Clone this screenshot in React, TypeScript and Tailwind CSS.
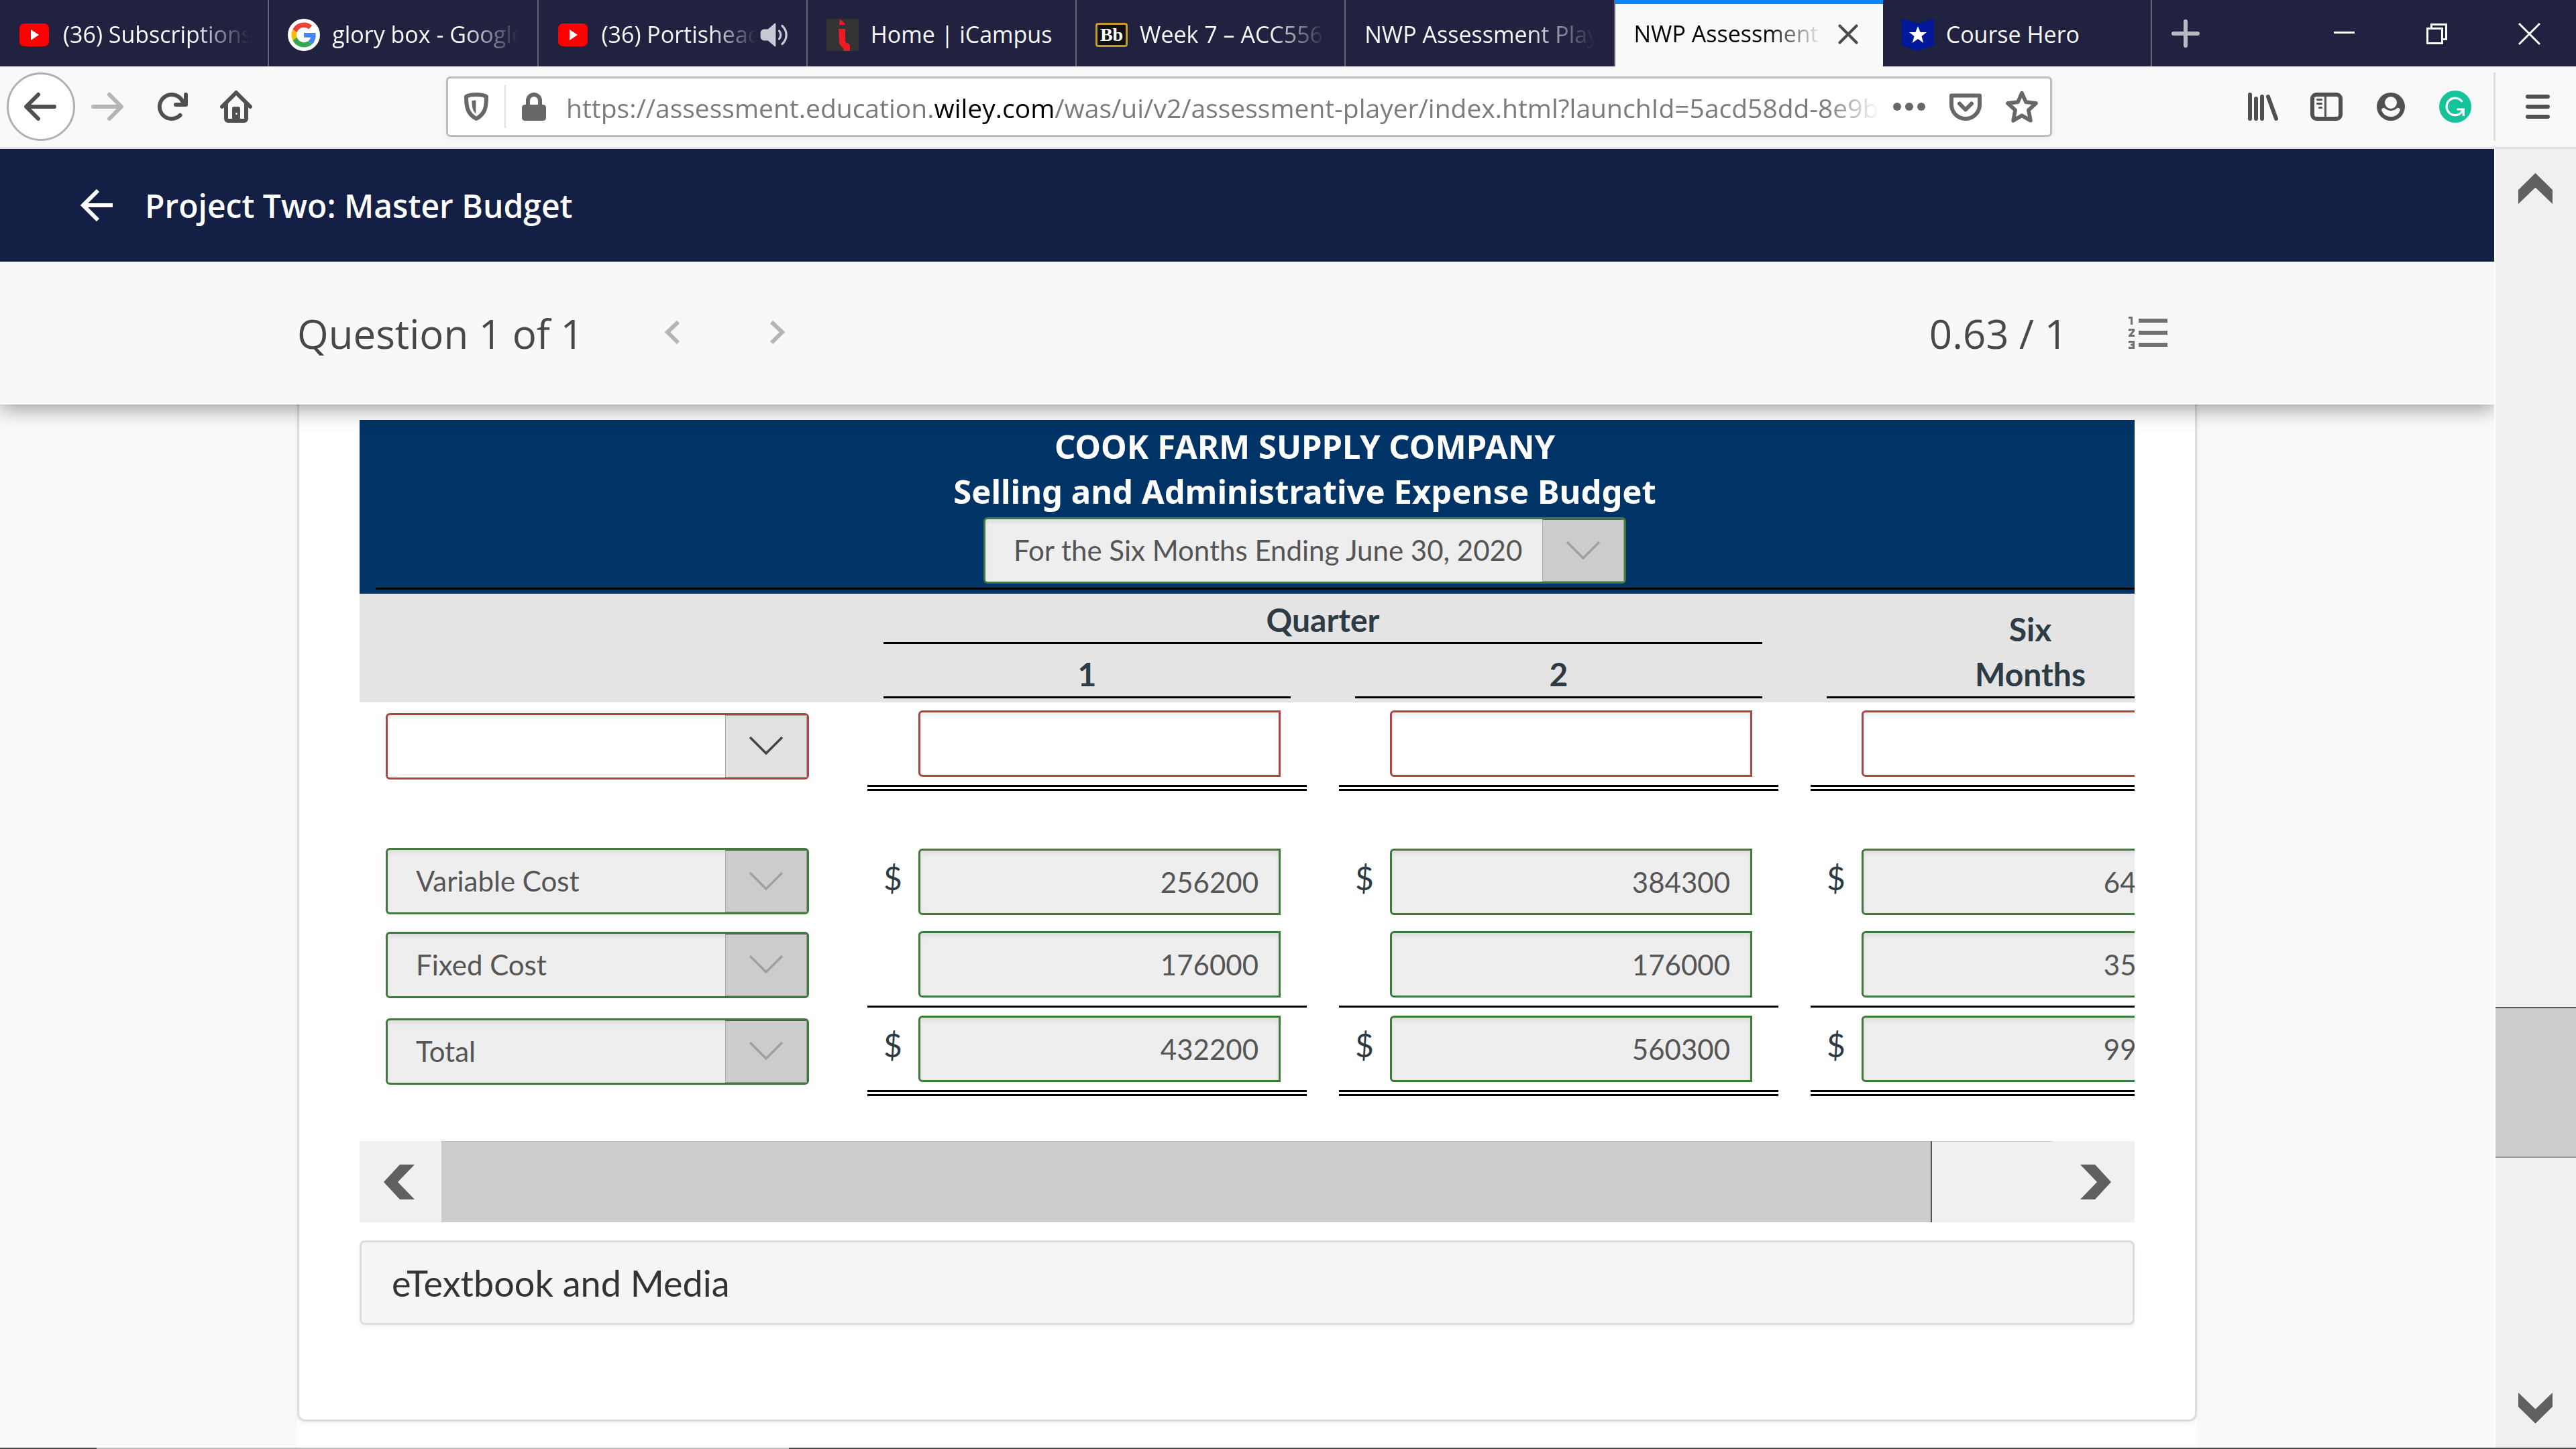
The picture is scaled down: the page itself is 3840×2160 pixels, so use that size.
import type { ReactNode } from "react";

const ICON = "size-12 shrink-0";

function YouTubeIcon() {
  return (
    <svg viewBox="0 0 48 48" className={ICON} aria-hidden="true">
      <rect x="1" y="7" width="44" height="34" rx="7" fill="#f00" />
      <path d="M18 16 30 24 18 32z" fill="#fff" />
    </svg>
  );
}

function GoogleIcon() {
  return (
    <svg viewBox="0 0 48 48" className={ICON} aria-hidden="true">
      <circle cx="24" cy="24" r="24" fill="#fff" />
      <g transform="translate(5.5 5.5) scale(.77)">
        <path fill="#EA4335" d="M24 9.5c3.54 0 6.71 1.22 9.21 3.6l6.85-6.85C35.9 2.38 30.47 0 24 0 14.62 0 6.51 5.38 2.56 13.22l7.98 6.19C12.43 13.72 17.74 9.5 24 9.5z" />
        <path fill="#4285F4" d="M46.98 24.55c0-1.57-.15-3.09-.38-4.55H24v9.02h12.94c-.58 2.96-2.26 5.48-4.78 7.18l7.73 6c4.51-4.18 7.09-10.36 7.09-17.65z" />
        <path fill="#FBBC05" d="M10.53 28.59c-.48-1.45-.76-2.99-.76-4.59s.27-3.14.76-4.59l-7.98-6.19C.92 16.46 0 20.12 0 24c0 3.88.92 7.54 2.56 10.78l7.97-6.19z" />
        <path fill="#34A853" d="M24 48c6.48 0 11.93-2.13 15.89-5.81l-7.73-6c-2.15 1.45-4.92 2.3-8.16 2.3-6.26 0-11.57-4.22-13.47-9.91l-7.98 6.19C6.51 42.62 14.62 48 24 48z" />
      </g>
    </svg>
  );
}

function CampusIcon() {
  return (
    <svg viewBox="0 0 48 48" className={ICON} aria-hidden="true">
      <rect width="48" height="48" fill="#333" />
      <path d="M20 1c3 2 6 4 8 8h-9z" fill="#ed1c24" />
      <path d="M18 15h10v18c0 4 7 3 7 7v8h-9c0-6-7-7-7-13z" fill="#ed1c24" />
    </svg>
  );
}

function BlackboardIcon() {
  return (
    <span className="flex h-9 w-12 shrink-0 items-center justify-center rounded-sm border-3 border-[#c79a2e] bg-[#111] font-['Liberation_Serif',serif] text-[28px] leading-none font-bold text-white" aria-hidden="true">
      Bb
    </span>
  );
}

function CourseHeroIcon() {
  return (
    <svg viewBox="0 0 48 48" className={ICON} aria-hidden="true">
      <path d="M0 0 24 7 48 0V40L24 48 0 40z" fill="#001899" />
      <path d="M24 11l3.600 9h9.400l-7.500 6 2.800 10L24 30l-8.300 6 2.800-10L11 20h9.400z" fill="#fff" />
    </svg>
  );
}

function SpeakerIcon() {
  return (
    <svg viewBox="0 0 16 16" className={ICON} fill="none" stroke="#c9c9d3" strokeLinecap="round" aria-hidden="true">
      <path d="M8.500 2.500v11L5 10.500H3a1.500 1.500 0 0 1-1.500-1.500V7A1.500 1.500 0 0 1 3 5.500h2z" fill="#c9c9d3" strokeLinejoin="round" strokeWidth=".6" />
      <path d="M10.500 6a3 3 0 0 1 0 4M12 3.500a6 6 0 0 1 0 9" strokeWidth="1.100" />
    </svg>
  );
}

type TabInfo = { title: string; icon?: ReactNode; audio?: boolean; active?: boolean; fade?: boolean };

const TABS: TabInfo[] = [
  { title: "(36) Subscriptions - YouTube", icon: <YouTubeIcon />, fade: true },
  { title: "glory box - Google Search", icon: <GoogleIcon />, fade: true },
  { title: "(36) Portishead - Glory Box", icon: <YouTubeIcon />, audio: true, fade: true },
  { title: "Home | iCampus", icon: <CampusIcon /> },
  { title: "Week 7 – ACC556", icon: <BlackboardIcon />, fade: true },
  { title: "NWP Assessment Player", fade: true },
  { title: "NWP Assessment Player", active: true, fade: true },
  { title: "Course Hero", icon: <CourseHeroIcon /> },
];

function Tab({ tab }: { tab: TabInfo }) {
  const base = "flex min-w-0 flex-1 items-center gap-[18px] pl-7 pr-7";
  return (
    <div className={tab.active ? `${base} border-t-6 border-[#0a84ff] bg-[#f9f9fa] pb-1 text-black` : `${base} border-r-2 border-r-[#636376] pt-1 text-[#f9f9fa]`}>
      {tab.icon}
      <a
        href="#tab"
        className={
          tab.fade
            ? "min-w-0 flex-1 overflow-hidden whitespace-nowrap [mask-image:linear-gradient(to_right,black_70%,transparent)]"
            : "min-w-0 flex-1 overflow-hidden whitespace-nowrap"
        }
      >
        {tab.title}
      </a>
      {tab.audio && (
        <button aria-label="Mute tab" className="-mr-1 -ml-4 shrink-0">
          <SpeakerIcon />
        </button>
      )}
      {tab.active && (
        <button aria-label="Close tab" className="shrink-0 pr-1">
          <svg viewBox="0 0 48 48" className="h-12 w-10" stroke="#4a4a4f" strokeWidth="5" strokeLinecap="round" aria-hidden="true">
            <path d="M9 9 39 39M39 9 9 39" />
          </svg>
        </button>
      )}
    </div>
  );
}

function TabStrip() {
  return (
    <div className="flex h-[99px] bg-[#20223f] font-['Open_Sans','Noto_Sans',sans-serif] text-[34px]">
      <nav aria-label="Tabs" className="flex min-w-0 flex-1">
        {TABS.map((tab, i) => (
          <Tab key={i} tab={tab} />
        ))}
      </nav>
      <div className="flex w-[632px] shrink-0 items-center justify-between pr-[45px] pl-[26px]">
        <button aria-label="New tab">
          <svg viewBox="0 0 48 48" className={ICON} stroke="#b9b9c3" strokeWidth="6" strokeLinecap="round" aria-hidden="true">
            <path d="M24 6v36M6 24h36" />
          </svg>
        </button>
        <div className="flex items-center gap-[90px]">
          <button aria-label="Minimize">
            <svg viewBox="0 0 48 48" className={ICON} aria-hidden="true">
              <path d="M8 21h31v3H8z" fill="#fff" />
            </svg>
          </button>
          <button aria-label="Restore">
            <svg viewBox="0 0 48 48" className={ICON} fill="none" stroke="#fff" strokeWidth="3" aria-hidden="true">
              <path d="M9.500 16.500h22v22h-22zM15.500 16V10.500h22v22H32" />
            </svg>
          </button>
          <button aria-label="Close window">
            <svg viewBox="0 0 48 48" className={ICON} stroke="#fff" strokeWidth="3" aria-hidden="true">
              <path d="M8 9 39 40M39 9 8 40" />
            </svg>
          </button>
        </div>
      </div>
    </div>
  );
}

const ARROW_LEFT = "M15 7H3.414l4.293-4.293a1 1 0 0 0-1.414-1.414l-6 6a1 1 0 0 0 0 1.414l6 6a1 1 0 0 0 1.414-1.414L3.414 9H15a1 1 0 0 0 0-2z";

function Toolbar() {
  return (
    <div className="flex h-[123px] items-center border-b-3 border-[#e0e0e1] bg-[#f9f9fa] pl-2.5 text-[#505053]">
      <button aria-label="Back" className="flex size-[102px] items-center justify-center rounded-full border-3 border-[#b1b1b3] bg-white pr-0.5">
        <svg viewBox="0 0 16 16" className={ICON} fill="currentColor" aria-hidden="true">
          <path d={ARROW_LEFT} />
        </svg>
      </button>
      <button aria-label="Forward" className="ml-6 text-[#b5b5b6]">
        <svg viewBox="0 0 16 16" className={ICON} fill="currentColor" aria-hidden="true">
          <path d={ARROW_LEFT} transform="translate(16 0) scale(-1 1)" />
        </svg>
      </button>
      <button aria-label="Reload" className="ml-12">
        <svg viewBox="0 0 16 16" className={ICON} fill="currentColor" aria-hidden="true">
          <path d="M15 1a1 1 0 0 0-1 1v2.418A6.995 6.995 0 1 0 8 15a6.954 6.954 0 0 0 4.950-2.050 1 1 0 0 0-1.414-1.414A5.019 5.019 0 1 1 12.549 6H10a1 1 0 0 0 0 2h5a1 1 0 0 0 1-1V2a1 1 0 0 0-1-1z" />
        </svg>
      </button>
      <button aria-label="Home" className="ml-12">
        <svg viewBox="0 0 16 16" className={ICON} fill="currentColor" aria-hidden="true">
          <path fillRule="evenodd" d="M15.707 7.293l-7-7a1 1 0 0 0-1.414 0l-7 7a1 1 0 0 0 1.414 1.414L2 8.414V14a2 2 0 0 0 2 2h8a2 2 0 0 0 2-2V8.414l.293.293a1 1 0 0 0 1.414-1.414zM12 14h-2V9a1 1 0 0 0-1-1H7a1 1 0 0 0-1 1v5H4V6.414l4-4 4 4zM8.500 11v1h-.7v-1z" />
        </svg>
      </button>

      <div className="mr-[289px] ml-[289px] flex h-[90px] min-w-0 flex-1 items-center rounded-md border-3 border-[#bdbdbe] bg-white pr-4.5 pl-[18px] text-[#676768] shadow-[0_3px_12px_rgba(0,0,0,0.06)]">
        <button aria-label="Tracking protection">
          <svg viewBox="0 0 16 16" className={ICON} fill="none" stroke="currentColor" aria-hidden="true">
            <path d="M8 2C6 2 4 2.300 3 3c0 5 .5 8.500 5 11 4.500-2.500 5-6 5-11-1-.7-3-1-5-1z" strokeWidth="2" strokeLinejoin="round" />
            <path d="M7.800 4.800c-.8 0-1.400.1-2 .3 0 3 .4 5 2 6.400z" fill="currentColor" stroke="none" />
          </svg>
        </button>
        <span className="ml-4.5 h-16 w-0.5 bg-[#dededf]" />
        <button aria-label="Site information" className="ml-4.5">
          <svg viewBox="0 0 16 16" className={ICON} aria-hidden="true">
            <path d="M5 7V5a3 3 0 0 1 6 0v2" fill="none" stroke="currentColor" strokeWidth="2" />
            <rect x="2" y="7" width="12" height="8" rx="1.500" fill="currentColor" />
          </svg>
        </button>
        <p className="ml-6 min-w-0 flex-1 overflow-hidden pt-1 font-['Open_Sans','Noto_Sans',sans-serif] text-[39px] leading-[60px] whitespace-nowrap text-[#7b7b7c] [mask-image:linear-gradient(to_right,black_96%,transparent)]">
          https://assessment.education.<span className="text-black">wiley.com</span>/was/ui/v2/assessment-player/index.html?launchId=5acd58dd-8e9b-4c1f
        </p>
        <div className="ml-5 flex items-center gap-9">
          <button aria-label="Page actions">
            <svg viewBox="0 0 16 16" className={ICON} fill="currentColor" aria-hidden="true">
              <circle cx="2" cy="8" r="2" />
              <circle cx="8" cy="8" r="2" />
              <circle cx="14" cy="8" r="2" />
            </svg>
          </button>
          <button aria-label="Save to Pocket">
            <svg viewBox="0 0 16 16" className={ICON} fill="none" stroke="currentColor" strokeWidth="2" strokeLinecap="round" strokeLinejoin="round" aria-hidden="true">
              <path d="M1 2.500h14V7A7 7 0 0 1 1 7z" />
              <path d="M5 6.500l3 3 3-3" />
            </svg>
          </button>
          <button aria-label="Bookmark this page">
            <svg viewBox="0 0 16 16" className={ICON} fill="none" stroke="currentColor" strokeWidth="1.900" strokeLinejoin="round" aria-hidden="true">
              <path d="M8 1.200l2 4.500 5 .6-3.700 3.400 1 5.200L8 12.400l-4.300 2.500 1-5.200L1 6.300l5-.6z" />
            </svg>
          </button>
        </div>
      </div>

      <div className="flex items-center gap-12 pr-[33px]">
        <button aria-label="Library">
          <svg viewBox="0 0 16 16" className={ICON} fill="none" stroke="currentColor" strokeWidth="2" strokeLinecap="round" aria-hidden="true">
            <path d="M2 2v12M5 4v10M8 3v11M11 3l4 11" />
          </svg>
        </button>
        <button aria-label="Sidebars">
          <svg viewBox="0 0 16 16" className={ICON} fill="none" stroke="currentColor" aria-hidden="true">
            <rect x="1" y="2" width="14" height="12" rx="2" strokeWidth="2" />
            <path d="M7.500 2v12" strokeWidth="1" />
            <path d="M3.500 4.500h2M3.500 6.500h2M4.500 8.500h1" strokeWidth="1" strokeLinecap="round" />
          </svg>
        </button>
        <button aria-label="Account">
          <svg viewBox="0 0 16 16" className={ICON} aria-hidden="true">
            <circle cx="8" cy="8" r="7" fill="currentColor" />
            <circle cx="8" cy="6" r="3" fill="#f9f9fa" />
            <path d="M3.700 10.400a1 1 0 0 1 1.500-1.400C6 9.600 7 10 8 10s2-.4 2.800-1a1 1 0 0 1 1.500 1.400C11.600 12 10 13 8 13s-3.600-1-4.300-2.600z" fill="#f9f9fa" />
          </svg>
        </button>
        <button aria-label="Grammarly">
          <svg viewBox="0 0 48 48" className={ICON} fill="none" aria-hidden="true">
            <circle cx="24" cy="24" r="24" fill="#15c39a" />
            <path d="M34.500 17A12.700 12.700 0 1 0 35 30M26.500 28H36.300V38" stroke="#fff" strokeWidth="3.200" />
          </svg>
        </button>
      </div>
      <div className="flex h-[102px] items-center border-l-3 border-[#dededf] pr-[33px] pl-[39px]">
        <button aria-label="Open menu">
          <svg viewBox="0 0 48 48" className={ICON} stroke="currentColor" strokeWidth="6" strokeLinecap="round" aria-hidden="true">
            <path d="M9 9h30M9 24h30M9 39h30" />
          </svg>
        </button>
      </div>
    </div>
  );
}

function CourseHeader() {
  return (
    <header className="relative z-20 flex h-[168px] shrink-0 items-center bg-[#141f45] pl-[120px] text-white">
      <button aria-label="Back to course">
        <svg viewBox="0 0 48 48" className={ICON} fill="none" stroke="currentColor" strokeWidth="6" aria-hidden="true">
          <path d="M48 24H5M26 2 4 24l22 22" />
        </svg>
      </button>
      <h1 className="ml-12 pt-0.5 font-['Open_Sans',sans-serif] text-[48px] font-semibold">Project Two: Master Budget</h1>
    </header>
  );
}

function QuestionBar() {
  return (
    <div className="relative z-10 flex h-[213px] shrink-0 items-center bg-[#f8f8f8] px-[443px] font-['Open_Sans',sans-serif] text-[60px] text-[#484848] shadow-[0_6px_30px_rgba(0,0,0,0.4)]">
      <h2>Question 1 of 1</h2>
      <div className="ml-[108px] flex items-center gap-[108px] pb-0.5">
        <button aria-label="Previous question">
          <svg viewBox="0 0 48 48" className={ICON} fill="none" stroke="#b5b5b5" strokeWidth="6" aria-hidden="true">
            <path d="M33 8 17 23l16 16" />
          </svg>
        </button>
        <button aria-label="Next question">
          <svg viewBox="0 0 48 48" className={ICON} fill="none" stroke="#b5b5b5" strokeWidth="6" aria-hidden="true">
            <path d="M16 8l16 15-16 16" />
          </svg>
        </button>
      </div>
      <p className="ml-auto">0.63 / 1</p>
      <button aria-label="Question list" className="mr-11 ml-[91px] pb-0.5">
        <svg viewBox="0 0 58 48" className="h-12 w-[58px]" fill="none" stroke="#707070" aria-hidden="true">
          <path d="M15 6h43M15 24h43M15 42h43" strokeWidth="6" />
          <path d="M0 1.500h4.500V12M0 19.500h7.500v2L1.500 28.500H9M0 37.500h7.500v9H0M3 42h4" strokeWidth="3" />
        </svg>
      </button>
    </div>
  );
}

function Picker({ label, value, options, wrong, className }: { label: string; value: string; options: string[]; wrong?: boolean; className: string }) {
  return (
    <div className={`relative h-[99px] font-['Lato',sans-serif] font-normal ${className}`}>
      <select
        aria-label={label}
        defaultValue={value}
        disabled={!wrong}
        className={
          wrong
            ? "size-full appearance-none rounded-md border-3 border-[#ad4343] bg-white px-[42px] text-[42px] text-[#555] opacity-100 shadow-[inset_0_4px_6px_rgba(0,0,0,0.08)]"
            : "size-full appearance-none rounded-md border-3 border-[#3e7a3e] bg-[#eee] px-[42px] text-[42px] text-[#555] opacity-100 shadow-[inset_0_4px_6px_rgba(0,0,0,0.08)]"
        }
      >
        {options.map((o) => (
          <option key={o} value={o}>
            {o}
          </option>
        ))}
      </select>
      <span
        className={
          wrong
            ? "pointer-events-none absolute inset-y-[3px] right-[3px] flex w-[122px] items-center justify-center border border-[#a5a5a5] bg-[#e1e1e1] text-[#444]"
            : "pointer-events-none absolute inset-y-[3px] right-[3px] flex w-[122px] items-center justify-center border border-t-[#555] border-r-[#999] border-b-[#999] border-l-[#aaa] bg-[#ccc] text-[#a0a0a0]"
        }
      >
        <svg viewBox="0 0 52 30" className="h-[30px] w-[52px]" fill="none" stroke="currentColor" strokeWidth="3.500" aria-hidden="true">
          <path d="M2 2l24 24L50 2" />
        </svg>
      </span>
    </div>
  );
}

const RULE_DOUBLE = "mx-6 mt-3 h-[9px] border-y-3 border-black";
const RULE_SINGLE = "mx-6 mt-3 h-[3px] bg-black";

function Amount({ label, value, dollar, wrong, rule }: { label: string; value: string; dollar?: boolean; wrong?: boolean; rule?: "single" | "double" }) {
  return (
    <td className="p-0 align-top">
      <div className="mt-3 flex items-start pr-[63px] pl-6">
        <span className="w-[76px] pt-2.5 text-center text-[48px] leading-[67px] text-[#2d3b45]">{dollar ? "$" : ""}</span>
        <input
          type="text"
          aria-label={label}
          defaultValue={value}
          readOnly={!wrong}
          className={
            wrong
              ? "h-[99px] min-w-0 flex-1 rounded-l-md border-3 border-[#ad4343] bg-white px-[30px] text-right text-[42px] text-[#555] shadow-[inset_0_4px_6px_rgba(0,0,0,0.08)]"
              : "h-[99px] min-w-0 flex-1 rounded-l-md border-3 border-[#3e7a3e] bg-[#eee] px-[30px] text-right text-[42px] text-[#555] shadow-[inset_0_4px_6px_rgba(0,0,0,0.08)]"
          }
        />
      </div>
      {rule ? <div className={rule === "double" ? RULE_DOUBLE : RULE_SINGLE} /> : <div className="h-3" />}
    </td>
  );
}

type Row = { name: string; values: string[]; dollar?: boolean; wrong?: boolean; rule?: "single" | "double" };

const COLUMNS = ["Quarter 1", "Quarter 2", "Six Months"];
const CHOICES = ["", "Variable Cost", "Fixed Cost", "Total"];

const ROWS: Row[] = [
  { name: "Variable Cost", values: ["256200", "384300", "640500"], dollar: true },
  { name: "Fixed Cost", values: ["176000", "176000", "352000"], rule: "single" },
  { name: "Total", values: ["432200", "560300", "992500"], dollar: true, rule: "double" },
];

function BudgetRow({ row }: { row: Row }) {
  return (
    <tr>
      <td className="p-0 pb-0.5 pl-[39px] align-middle">
        <Picker label={row.name || "Row label"} value={row.name} options={CHOICES} wrong={row.wrong} className="w-[631px]" />
      </td>
      {row.values.map((v, i) => (
        <Amount key={i} label={`${row.name} ${COLUMNS[i]}`} value={v} dollar={row.dollar} wrong={row.wrong} rule={row.rule} />
      ))}
    </tr>
  );
}

function BudgetTable() {
  return (
    <div className="overflow-hidden">
      <table className="w-[2842px] table-fixed border-collapse font-['Lato',sans-serif] text-[48px] leading-[67px] text-[#2d3b45]">
        <colgroup>
          <col className="w-[733px]" />
          <col className="w-[703px]" />
          <col className="w-[703px]" />
          <col className="w-[703px]" />
        </colgroup>
        <thead>
          <tr className="bg-[#003366]">
            <th colSpan={4} className="py-1.5 pr-0 pl-6 font-normal">
              <div className="flex flex-col items-center pr-12 pb-1.5">
                <p className="font-['Noto_Sans',sans-serif] text-[49px] leading-[67px] font-bold text-white">COOK FARM SUPPLY COMPANY</p>
                <p className="font-['Noto_Sans',sans-serif] text-[49px] leading-[67px] font-bold text-white">Selling and Administrative Expense Budget</p>
                <Picker
                  label="Budget period"
                  value="For the Six Months Ending June 30, 2020"
                  options={["For the Six Months Ending June 30, 2020"]}
                  className="mt-[5px] w-[958px]"
                />
              </div>
              <div className="h-[3px] bg-black" />
            </th>
          </tr>
          <tr className="bg-[#e4e4e4]">
            <td rowSpan={2} />
            <th colSpan={2} className="px-12 pt-[5px] pb-0 font-bold">
              <div className="border-b-3 border-black">Quarter</div>
            </th>
            <th rowSpan={2} className="px-12 pt-0 pb-1.5 align-bottom font-bold">
              <div className="border-b-3 border-black">
                Six
                <br />
                Months
              </div>
            </th>
          </tr>
          <tr className="bg-[#e4e4e4]">
            <th className="px-12 pt-[11px] pb-1.5 font-bold">
              <div className="border-b-3 border-black">1</div>
            </th>
            <th className="px-12 pt-[11px] pb-1.5 font-bold">
              <div className="border-b-3 border-black">2</div>
            </th>
          </tr>
        </thead>
        <tbody>
          <BudgetRow row={{ name: "", values: ["", "", ""], wrong: true, rule: "double" }} />
          <tr>
            <td colSpan={4} className="h-[74px] p-0" />
          </tr>
          {ROWS.map((row) => (
            <BudgetRow key={row.name} row={row} />
          ))}
        </tbody>
      </table>
    </div>
  );
}

function HorizontalScrollbar() {
  return (
    <div className="mt-[67px] flex h-[121px] bg-[#f0f0f0]">
      <button aria-label="Scroll left" className="flex w-[122px] items-center justify-center pr-1">
        <svg viewBox="0 0 46 52" className="h-[52px] w-[46px]" fill="#606060" aria-hidden="true">
          <path d="M24 0h22L21 26l25 26H24L0 26z" />
        </svg>
      </button>
      <div className="grow-[2222] basis-0 border-t border-r-2 border-t-[#bbb] border-r-[#555] bg-[#cdcdcd]" />
      <div className="grow-[180] basis-0 border-t border-[#ccc]" />
      <button aria-label="Scroll right" className="flex w-[122px] items-center justify-center pl-1.5">
        <svg viewBox="0 0 46 52" className="h-[52px] w-[46px]" fill="#606060" aria-hidden="true">
          <path d="M22 0H0l25 26L0 52h22L46 26z" />
        </svg>
      </button>
    </div>
  );
}

function PageScrollbar() {
  return (
    <div className="flex w-[122px] shrink-0 flex-col border-l-2 border-white bg-[#f0f0f0]">
      <button aria-label="Scroll up" className="flex h-[118px] items-center justify-center pr-0.5">
        <svg viewBox="0 0 51 46" className="h-[46px] w-[51px]" fill="#606060" aria-hidden="true">
          <path d="M25.500 0 51 25v21L25.500 21.500 0 46V25z" />
        </svg>
      </button>
      <div className="grow-[1164] basis-0" />
      <div className="grow-[221] basis-0 border-t-2 border-b-2 border-t-[#555] border-b-[#999] bg-[#cdcdcd]" />
      <div className="grow-[315] basis-0" />
      <button aria-label="Scroll down" className="flex h-[118px] items-center justify-center pr-0.5">
        <svg viewBox="0 0 51 46" className="h-[46px] w-[51px]" fill="#606060" aria-hidden="true">
          <path d="M25.500 46 51 21V0L25.500 24.500 0 0v21z" />
        </svg>
      </button>
    </div>
  );
}

export default function App() {
  return (
    <div className="flex h-screen flex-col overflow-hidden bg-[#fafafa]">
      <TabStrip />
      <Toolbar />
      <div className="flex min-h-0 flex-1">
        <div className="flex min-w-0 flex-1 flex-col overflow-hidden">
          <CourseHeader />
          <QuestionBar />
          <main className="mx-[443px] min-h-0 flex-1 bg-white">
            <section className="rounded-b-xl border-x-3 border-b-3 border-[#ddd] bg-white px-[90px] pt-[23px] pb-[141px] shadow-[0_3px_6px_rgba(0,0,0,0.06)]">
              <BudgetTable />
              <HorizontalScrollbar />
              <button className="mt-[27px] flex h-[126px] w-full items-center rounded-lg border-3 border-[#ddd] bg-[#f5f5f5] pl-[45px] font-['Lato',sans-serif] text-[54px] text-[#333] shadow-[0_3px_6px_rgba(0,0,0,0.06)]">
                eTextbook and Media
              </button>
            </section>
          </main>
        </div>
        <PageScrollbar />
      </div>
      <footer className="flex h-0.5 shrink-0">
        <div className="grow-[144] basis-0 bg-[#4a4a4a]" />
        <div className="grow-[1032] basis-0 bg-[#bbb]" />
        <div className="grow-[2664] basis-0 bg-[#4a4a4a]" />
      </footer>
    </div>
  );
}
